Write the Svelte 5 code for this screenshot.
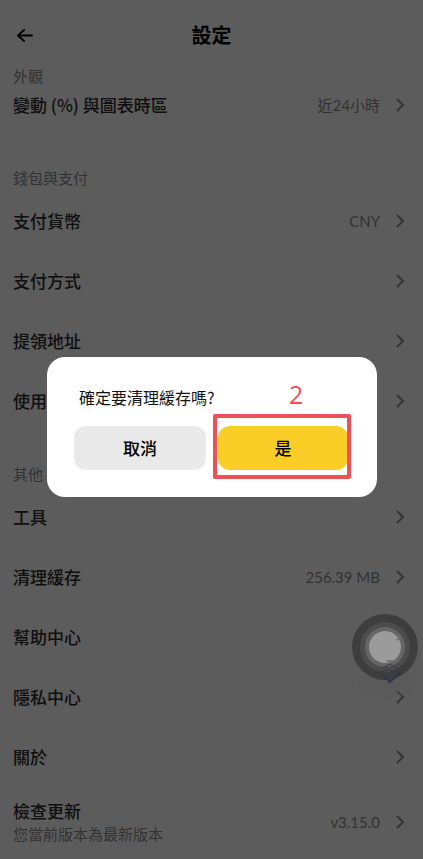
<script lang="ts">
  interface Row {
    label: string;
    value?: string;
    note?: string;
    noChevron?: boolean;
  }

  interface Section {
    title: string;
    rows: Row[];
  }

  const sections: Section[] = [
    {
      title: '外觀',
      rows: [{ label: '變動 (%) 與圖表時區', value: '近24小時' }]
    },
    {
      title: '錢包與支付',
      rows: [
        { label: '支付貨幣', value: 'CNY' },
        { label: '支付方式' },
        { label: '提領地址' },
        { label: '使用' }
      ]
    },
    {
      title: '其他',
      rows: [
        { label: '工具' },
        { label: '清理緩存', value: '256.39 MB' },
        { label: '幫助中心', noChevron: true },
        { label: '隱私中心' },
        { label: '關於' },
        { label: '檢查更新', value: 'v3.15.0', note: '您當前版本為最新版本' }
      ]
    }
  ];

  let confirmOpen = $state(true);

  function openConfirm(row: Row) {
    if (row.label === '清理緩存') {
      confirmOpen = true;
    }
  }

  function closeConfirm() {
    confirmOpen = false;
  }
</script>

<div class="page">
  <header class="header">
    <button class="back" aria-label="返回">
      <svg width="18" height="16" viewBox="0 0 18 16">
        <path d="M8 3 L2 8.5 L8 14 M2 8.5 H16" />
      </svg>
    </button>
    <h1>設定</h1>
  </header>

  <main>
    {#each sections as section}
      <section>
        <h2>{section.title}</h2>
        {#each section.rows as row}
          <button class="row" class:with-note={row.note} onclick={() => openConfirm(row)}>
            <span class="text">
              <span class="label">{row.label}</span>
              {#if row.note}
                <span class="note">{row.note}</span>
              {/if}
            </span>
            {#if row.value}
              <span class="value">{row.value}</span>
            {/if}
            {#if !row.noChevron}
              <svg class="chevron" width="8" height="14" viewBox="0 0 8 14">
                <path d="M1 1 L7 7 L1 13" />
              </svg>
            {/if}
          </button>
        {/each}
      </section>
    {/each}
  </main>
</div>

{#if confirmOpen}
  <div class="overlay">
    <div class="dialog" role="dialog" aria-modal="true" aria-labelledby="confirm-text">
      <p id="confirm-text">確定要清理緩存嗎?</p>
      <div class="actions">
        <button class="btn cancel" onclick={closeConfirm}>取消</button>
        <div class="confirm-wrap">
          <button class="btn confirm" onclick={closeConfirm}>是</button>
          <span class="step">2</span>
          <span class="marker"></span>
        </div>
      </div>
    </div>
  </div>
{/if}

<!-- floating assistive button -->
<button class="assist" aria-label="輔助">
  <svg width="72" height="96" viewBox="0 0 72 96">
    <ellipse cx="37" cy="72" rx="29" ry="15" fill="#575757" opacity="0.4" />
    <circle cx="36" cy="36" r="33" fill="#3e3e3e" />
    <circle cx="36" cy="36" r="25" fill="#4c4c4c" />
    <circle cx="36" cy="36" r="20" fill="#666666" />
    <circle cx="36" cy="36" r="16" fill="#9b9b9b" />
    <path d="M33 57 L41 53 L49 58 M31 61 L38 59 M37 55 L45 62" fill="none" stroke="#3a3a40" stroke-width="1" />
    <path d="M34 64 L41 71 L52 60" fill="none" stroke="#34344f" stroke-width="2" />
    <path d="M38 50 H44 M48 29 L51 26" fill="none" stroke="#737373" stroke-width="2" />
  </svg>
</button>

<style>
  :global(body) {
    margin: 0;
    background: #fff;
  }

  .page,
  .overlay {
    font-family: 'Noto Sans CJK TC', sans-serif;
  }

  button {
    border: none;
    padding: 0;
    background: none;
    font-family: inherit;
    cursor: pointer;
  }

  svg {
    display: block;
  }

  .header {
    position: relative;
    display: flex;
    align-items: center;
    justify-content: center;
    height: 66px;
  }

  .back {
    position: absolute;
    left: 16px;
    top: 27px;
  }

  .back path {
    fill: none;
    stroke: #000;
    stroke-width: 2;
    stroke-linecap: round;
    stroke-linejoin: round;
  }

  h1 {
    margin: 0;
    padding-top: 4px;
    font-size: 20px;
    line-height: 28px;
    font-weight: 700;
    color: #000;
  }

  section {
    padding: 0 19px 33px 13px;
  }

  section:last-child {
    padding-bottom: 0;
  }

  h2 {
    margin: 0 0 3px;
    font-size: 15px;
    line-height: 20px;
    font-weight: 400;
    color: #8c8c8c;
  }

  .row {
    display: flex;
    align-items: center;
    width: 100%;
    height: 60px;
    text-align: left;
  }

  section:first-child .row {
    height: 46px;
    padding-bottom: 14px;
  }

  .row.with-note {
    height: 70px;
  }

  .text {
    flex: 1;
    display: flex;
    flex-direction: column;
  }

  .label {
    font-size: 17px;
    line-height: 24px;
    font-weight: 500;
    color: #2b2b2b;
  }

  .note {
    font-size: 15px;
    line-height: 22px;
    color: #8c8c8c;
  }

  .value {
    font-family: Lato, 'Noto Sans CJK TC', sans-serif;
    font-size: 15px;
    line-height: 20px;
    color: #8c8c8c;
  }

  .chevron {
    margin-left: 16px;
  }

  .chevron path {
    fill: none;
    stroke: #909090;
    stroke-width: 2;
  }

  .overlay {
    position: fixed;
    inset: 0;
    display: flex;
    align-items: center;
    justify-content: center;
    padding: 0 46px 5px 47px;
    background: rgba(0, 0, 0, 0.64);
  }

  .dialog {
    flex: 1;
    max-width: 400px;
    padding: 28px 27px 27px;
    border-radius: 18px;
    background: #fff;
  }

  .dialog p {
    margin: 0 0 17px;
    padding-left: 5px;
    font-size: 16px;
    line-height: 24px;
    color: #111;
  }

  .actions {
    display: flex;
    gap: 12px;
  }

  .btn {
    flex: 1;
    height: 44px;
    border-radius: 12px;
    font-size: 17px;
    line-height: 24px;
    font-weight: 500;
    color: #000;
  }

  .cancel {
    background: #e9e9e9;
  }

  .confirm {
    margin-right: 2px;
    background: #fbce27;
  }

  .confirm-wrap {
    position: relative;
    flex: 1;
    display: flex;
  }

  .marker {
    position: absolute;
    inset: -12px -1px -9px -5px;
    border: 4px solid #ef5058;
    border-radius: 2px;
    pointer-events: none;
  }

  .step {
    position: absolute;
    left: 71px;
    bottom: 58px;
    font-family: 'Open Sans', 'Noto Sans', sans-serif;
    font-size: 25px;
    line-height: 36px;
    font-weight: 400;
    color: #ef5058;
  }

  .assist {
    position: fixed;
    right: 2px;
    top: 611px;
  }
</style>
